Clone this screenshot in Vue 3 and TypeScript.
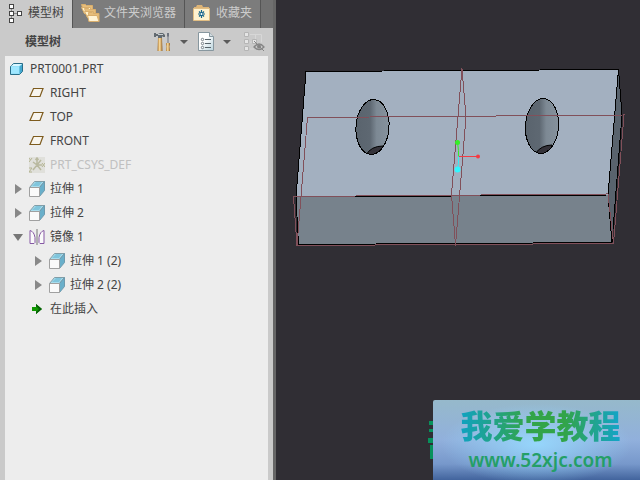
<script setup lang="ts">
import { computed, ref } from 'vue'

type IconKind = 'part' | 'plane' | 'csys' | 'extrude' | 'mirror' | 'insert'

interface TreeItem {
  id: number
  label: string
  icon: IconKind
  level: number
  parent?: number
  expandable?: boolean
  muted?: boolean
}

const items: TreeItem[] = [
  { id: 1, label: 'PRT0001.PRT', icon: 'part', level: 0 },
  { id: 2, label: 'RIGHT', icon: 'plane', level: 1 },
  { id: 3, label: 'TOP', icon: 'plane', level: 1 },
  { id: 4, label: 'FRONT', icon: 'plane', level: 1 },
  { id: 5, label: 'PRT_CSYS_DEF', icon: 'csys', level: 1, muted: true },
  { id: 6, label: '拉伸 1', icon: 'extrude', level: 1, expandable: true },
  { id: 7, label: '拉伸 2', icon: 'extrude', level: 1, expandable: true },
  { id: 8, label: '镜像 1', icon: 'mirror', level: 1, expandable: true },
  { id: 9, label: '拉伸 1 (2)', icon: 'extrude', level: 2, parent: 8, expandable: true },
  { id: 10, label: '拉伸 2 (2)', icon: 'extrude', level: 2, parent: 8, expandable: true },
  { id: 11, label: '在此插入', icon: 'insert', level: 1 },
]

const open = ref<number[]>([8])
const activeTab = ref<string>('model')

const visible = computed(() =>
  items.filter((item) => item.parent === undefined || open.value.includes(item.parent)),
)

function toggle(id: number): void {
  open.value = open.value.includes(id) ? open.value.filter((n) => n !== id) : [...open.value, id]
}
</script>

<template>
  <div class="app">
    <aside class="sidebar">
      <nav class="tabs">
        <button class="tab" :class="{ active: activeTab === 'model' }" @click="activeTab = 'model'">
          <svg width="16" height="20" viewBox="0 0 16 20" fill="none" shape-rendering="crispEdges">
            <path d="M3.5 5v10M5 10.500h6" stroke="#888" />
            <path d="M1.500 1.500h4v4h-4zM1.500 8.500h4v4h-4zM1.500 15.500h4v4h-4zM9.500 8.500h4v4h-4z" fill="#fff" stroke="#444" />
          </svg>
          <span>模型树</span>
        </button>
        <button class="tab" :class="{ active: activeTab === 'folders' }" @click="activeTab = 'folders'">
          <svg width="19" height="20" viewBox="0 0 19 20">
            <g stroke="#d9ae6c" stroke-width="1">
              <path d="M.5 1.500h4l1 1h6v8h-8z" fill="#e6bd7b" />
              <path d="M.5 4.500h9v6h-6z" fill="#fff0c8" />
              <path d="M3.500 5.500h4l1 1h6v8h-8z" fill="#e6bd7b" />
              <path d="M3.500 8.500h9v6h-6z" fill="#fff0c8" />
              <path d="M7.500 9.500h4l1 1h5.500v8H8z" fill="#e6bd7b" />
              <path d="M6.500 12.500h9.500l2 6H8z" fill="#fff3d5" />
            </g>
          </svg>
          <span>文件夹浏览器</span>
        </button>
        <button class="tab" :class="{ active: activeTab === 'favorites' }" @click="activeTab = 'favorites'">
          <svg width="19" height="18" viewBox="0 0 19 18">
            <path d="M1 3h2l1-2h5l1 2h6v4H1z" fill="#ddb477" />
            <path d="M.5 4.500h16v12H.5z" fill="#fff2cf" stroke="#e2be83" />
            <path d="M8.500 6v8M5 10h7M6 7.500l5 5M11 7.500l-5 5" stroke="#17658b" stroke-width="1.200" />
            <circle cx="8.500" cy="10" r="1" fill="#fff" />
          </svg>
          <span>收藏夹</span>
        </button>
      </nav>

      <header class="toolbar">
        <h1>模型树</h1>
        <div class="tools">
          <button class="tool" aria-label="设置">
            <svg width="18" height="20" viewBox="0 0 18 20">
              <defs>
                <linearGradient id="wood" x1="0" x2="1">
                  <stop offset="0" stop-color="#a87532" />
                  <stop offset=".45" stop-color="#ffe0a0" />
                  <stop offset="1" stop-color="#8d5d25" />
                </linearGradient>
              </defs>
              <path d="M0 1h2v1h2l2-1h3l2 2v2H9L8 4v2H4V4H2v1H0z" fill="#626a70" />
              <path d="M4 2.500h5" stroke="#cbd0d3" />
              <path d="M4 6h4l.5 13h-5z" fill="url(#wood)" />
              <path d="M13 1h2v3l-.5 1v7h-1V5L13 4z" fill="#707580" />
              <path d="M12 11h4v2l-.5 1 .5 5h-4l.500-5-.5-1z" fill="url(#wood)" />
            </svg>
            <i class="caret"></i>
          </button>
          <button class="tool" aria-label="显示">
            <svg width="17" height="20" viewBox="0 0 17 20">
              <defs>
                <linearGradient id="sheet" x1="0" y1="0" x2="1" y2="1">
                  <stop offset=".4" stop-color="#fff" />
                  <stop offset="1" stop-color="#b9d3dc" />
                </linearGradient>
              </defs>
              <path d="M.5.5h11l4 4v14H.5z" fill="url(#sheet)" stroke="#87979f" />
              <path d="M11.500.5v4h4" fill="#d4dde1" stroke="#87979f" />
              <path d="M7 7.500h6M7 11.500h6M7 15.500h6" stroke="#59656c" />
              <g fill="#fff" stroke="#59656c" stroke-width=".8">
                <circle cx="4.500" cy="7.500" r="1.200" /><circle cx="4.500" cy="11.500" r="1.200" /><circle cx="4.500" cy="15.500" r="1.200" />
              </g>
            </svg>
            <i class="caret"></i>
          </button>
          <button class="tool" aria-label="过滤" disabled>
            <svg width="21" height="20" viewBox="0 0 21 20" fill="none">
              <path d="M6 2.500h11.500v8M11.500 3v7M6 10h3M6 17h4" stroke="#d7d7d7" />
              <path d="M.5.500h4v4h-4zM.5 7.500h4v4h-4zM.5 14.500h4v4h-4zM8.500 7.500h4v4h-4z" fill="#e5e5e5" stroke="#b5b5b5" />
              <path d="M10 15q5-6 10 0-5 5-10 0z" stroke="#858585" stroke-width="1.300" />
              <circle cx="15" cy="14.500" r="2" fill="#858585" />
              <path d="M10 9l10 10" stroke="#858585" />
            </svg>
          </button>
        </div>
      </header>

      <ul class="tree">
        <li v-for="item in visible" :key="item.id" :class="['row', 'level-' + item.level, { muted: item.muted }]">
          <button
            v-if="item.expandable"
            class="toggle"
            :class="{ open: open.includes(item.id) }"
            :aria-label="item.label"
            :aria-expanded="open.includes(item.id)"
            @click="toggle(item.id)"
          ></button>
          <span v-else-if="item.level > 0" class="toggle-space"></span>

          <svg v-if="item.icon === 'part'" class="icon" viewBox="0 0 16 16">
            <path d="M1.500 5.500l3-3h9v8l-3 3h-9z" fill="#8edcf5" stroke="#286d88" stroke-linejoin="round" />
            <path d="M2 5.500h8v7H2z" fill="#9fe7ff" />
            <path d="M2 5l3-2h8l-3 2z" fill="#d9f6ff" />
            <path d="M10.500 5.500l2.500-2v7l-2.500 2.500z" fill="#42a8d0" />
          </svg>
          <svg v-else-if="item.icon === 'plane'" class="icon" viewBox="0 0 16 16">
            <path d="M4.500 3.500H14L11 11.500H1z" fill="#f8f5ee" stroke="#7d5b1e" stroke-width="1.200" />
          </svg>
          <svg v-else-if="item.icon === 'csys'" class="icon" viewBox="0 0 16 16" fill="none">
            <path d="M0 0h16v16H0z" fill="#e0e0db" />
            <path d="M8 8V1M6.500 3L8 1l1.500 2M8 8h5M8 8l-4 5M8 8l4 5M8 8L4 5M8 8l4-5" stroke="#b9b9a0" stroke-width="1.500" />
            <path d="M0 1l1.500 2L3 1M1.500 3L0 5M13 6l3 4M16 6l-3 4M0 11h3l-3 4h3" stroke="#b5b594" />
          </svg>
          <svg v-else-if="item.icon === 'extrude'" class="icon" viewBox="0 0 16 16">
            <path d="M.5 6.500l5-6h10l-5 6z" fill="#a9dded" stroke="#819da7" />
            <path d="M10.500 6.500l5-6v9l-5 6z" fill="#69afca" stroke="#6e9aad" />
            <path d="M3 5l4-4h6l-3 4z" fill="#80c5dc" />
            <path d="M.5 6.500h10v9H.5z" fill="#fafafa" stroke="#a0a0a0" />
          </svg>
          <svg v-else-if="item.icon === 'mirror'" class="icon" viewBox="0 0 16 16" fill="none">
            <path d="M1 14.500v-13q4 1 5 7v5l-1 1zM15 14.500v-13q-4 1-5 7v5l1 1z" fill="#fafafa" stroke="#8659a5" />
            <path d="M8 0v16" stroke="#777" />
          </svg>
          <svg v-else class="icon" viewBox="0 0 16 16">
            <path d="M3 6h4V3l6 5-6 5v-3H3z" fill="#119800" />
            <path d="M7 3l6 5-6 5v-2l3-3-3-3z" fill="#075e08" />
          </svg>
          <span class="label">{{ item.label }}</span>
        </li>
      </ul>
    </aside>

    <main class="viewport">
      <svg class="model" viewBox="276 0 364 480" preserveAspectRatio="xMinYMin meet" role="img" aria-label="PRT0001">
        <defs>
          <linearGradient id="bore" x1="0" x2="1">
            <stop offset="0" stop-color="#59636d" />
            <stop offset=".42" stop-color="#5e6872" />
            <stop offset=".6" stop-color="#7d8994" />
            <stop offset="1" stop-color="#87939e" />
          </linearGradient>
          <clipPath id="left-hole"><ellipse cx="372.500" cy="127" rx="16.500" ry="27.500" transform="rotate(4 372.500 127)" /></clipPath>
          <clipPath id="right-hole"><ellipse cx="542" cy="126" rx="16.500" ry="27.500" transform="rotate(4 542 126)" /></clipPath>
        </defs>
        <g stroke="#000" stroke-linejoin="round" shape-rendering="crispEdges">
          <path d="M306 71.500L618.500 69.500 608 195 296 197z" fill="#a3b0c0" />
          <path d="M296 197L608 195 612 242.500 298.500 244.500z" fill="#77828c" />
          <path d="M618.500 69.500L622 115 612 242.500 608 195z" fill="#59636d" />
        </g>
        <g clip-path="url(#left-hole)">
          <path d="M355 98h36v60h-36z" fill="url(#bore)" />
          <path d="M366 155q5-9 17-9v12h-17z" fill="#343239" stroke="#000" />
        </g>
        <g clip-path="url(#right-hole)">
          <path d="M524 97h37v60h-37z" fill="url(#bore)" />
          <path d="M535 154q6-9 17-9v12h-17z" fill="#343239" stroke="#000" />
        </g>
        <g fill="none" stroke="#000" shape-rendering="crispEdges">
          <ellipse cx="372.500" cy="127" rx="16.500" ry="27.500" transform="rotate(4 372.500 127)" />
          <ellipse cx="542" cy="126" rx="16.500" ry="27.500" transform="rotate(4 542 126)" />
        </g>
        <g fill="none" stroke="#81505a" shape-rendering="crispEdges">
          <path d="M307.500 117.500L624 115 613.500 243.500 297 245.500z" />
          <path d="M297 245.500L293.500 196.500 608 194 613.500 243.500" />
          <path d="M462 68.500L466 117 455.500 245.500 451.500 194z" />
        </g>
        <path d="M458.500 156.500h19" stroke="#f43b43" />
        <path d="M458.500 156.500v-6l-1-8" stroke="#35ee27" fill="none" />
        <path d="M458.500 156.500v7l-1 6" stroke="#31edf3" fill="none" />
        <circle cx="457.500" cy="142.500" r="2.500" fill="#35ee27" />
        <circle cx="457.500" cy="169.500" r="3" fill="#31f7ff" />
        <circle cx="478" cy="156.500" r="2" fill="#f43b43" />
      </svg>

      <div class="watermark">
        <svg class="fragment" width="5" height="38" viewBox="0 0 5 38">
          <path d="M1 0h4v4H1zM1 8h4v3H1zM0 17h5v5H0zM2 24h3v14H2z" fill="#07915c" />
        </svg>
        <div class="brand">
          <strong>我爱学教程</strong>
          <a href="http://www.52xjc.com">www.52xjc.com</a>
        </div>
      </div>
    </main>
  </div>
</template>

<style>
body {
  margin: 0;
}
</style>

<style scoped>
.app {
  display: flex;
  min-height: 100vh;
  background: #302e34;
  color: #444;
  font-family: "Noto Sans", "Noto Sans CJK SC", sans-serif;
  font-size: 12px;
}
button {
  margin: 0;
  padding: 0;
  border: 0;
  background: none;
  color: inherit;
  font: inherit;
}
.sidebar {
  display: flex;
  flex: 0 0 273px;
  flex-direction: column;
  border-right: 3px solid #666;
  background: #cacaca;
}
.tabs {
  display: flex;
  height: 28px;
  background: #707070;
}
.tab {
  display: flex;
  align-items: center;
  gap: 4px;
  padding: 0 8px 2px;
  border-right: 1px solid #555;
  background: #7c7c7c;
  color: #ccc;
  line-height: 18px;
  white-space: nowrap;
}
.tab.active {
  background: #cacaca;
  color: #444;
}
.tab svg {
  flex: none;
}
.toolbar {
  display: flex;
  align-items: center;
  justify-content: space-between;
  height: 28px;
  padding: 0 8px 0 25px;
}
h1 {
  margin: 0;
  font-size: 12px;
  font-weight: 600;
  line-height: 18px;
}
.tools {
  display: flex;
  align-items: center;
  gap: 10px;
}
.tool {
  display: flex;
  align-items: center;
  gap: 8px;
}
.tool:last-child {
  padding-left: 3px;
}
.caret {
  border: 4px solid transparent;
  border-top-color: #5b5b5b;
  border-bottom: 0;
}
.tree {
  flex: 1;
  margin: 0 5px;
  padding: 1px 0;
  background: #ededed;
  list-style: none;
}
.row {
  display: flex;
  align-items: center;
  height: 24px;
  padding-left: 4px;
}
.level-1 {
  padding-left: 8px;
}
.level-2 {
  padding-left: 28px;
}
.toggle,
.toggle-space {
  flex: none;
  width: 16px;
  height: 16px;
}
.toggle {
  display: grid;
  place-items: center;
  width: 10px;
  margin-right: 6px;
}
.toggle::before {
  content: "";
  border: 5px solid transparent;
  border-right: 0;
  border-left: 7px solid #888;
}
.toggle.open::before {
  border: 5px solid transparent;
  border-top: 7px solid #777;
  border-bottom: 0;
}
.icon {
  flex: none;
  width: 16px;
  height: 16px;
}
.label {
  padding-left: 5px;
  line-height: 18px;
  white-space: nowrap;
}
.muted {
  color: #c0c0c0;
}
.viewport {
  position: relative;
  flex: 1;
  min-width: 0;
  overflow: hidden;
}
.model {
  display: block;
  width: 100%;
}
.watermark {
  position: absolute;
  right: 0;
  bottom: 0;
  display: flex;
  align-items: center;
}
.brand {
  display: flex;
  flex-direction: column;
  align-items: center;
  box-sizing: border-box;
  width: 207px;
  height: 80px;
  padding: 6px 0 0 8px;
  border-radius: 2px 0 0 0;
  background:
    radial-gradient(ellipse at 50% 55%, rgba(151, 218, 255, 0.9), rgba(151, 205, 255, 0) 65%),
    linear-gradient(#96b9cb, #91b0dc 50%, #7798cb 80%, #42649d);
}
.brand strong {
  background: linear-gradient(90deg, #10a2c2, #32a449 42%, #32a449 65%, #12a4cc);
  background-clip: text;
  color: transparent;
  font-size: 32px;
  font-weight: 900;
  line-height: 40px;
  white-space: nowrap;
}
.brand a {
  color: #249f67;
  font-size: 19px;
  font-weight: 600;
  line-height: 28px;
  text-decoration: none;
}
</style>
